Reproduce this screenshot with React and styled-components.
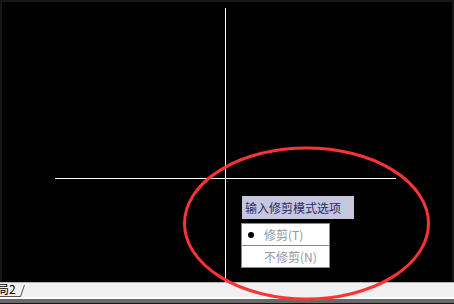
import React from "react";
import styled, { createGlobalStyle } from "styled-components";

const GlobalStyle = createGlobalStyle`
    html, body {
        margin: 0;
        padding: 0;
        background: #000;
    }
    body {
        font-family: "Liberation Sans", "Noto Sans CJK SC", sans-serif;
    }
`;

const Frame = styled.div`
    position: relative;
    width: 454px;
    height: 304px;
    box-sizing: border-box;
    padding: 2px 2px 0 2px;
    background: #171717;
    display: flex;
    flex-direction: column;
    overflow: hidden;
`;

const Canvas = styled.div`
    position: relative;
    flex: 1;
    background: #000;
`;

const Crosshair = styled.svg`
    position: absolute;
    inset: 0;
    width: 100%;
    height: 100%;
`;

const Prompt = styled.div`
    position: absolute;
    left: 240px;
    top: 194px;
    width: 112px;
    height: 23px;
    box-sizing: border-box;
    padding-left: 3px;
    display: flex;
    align-items: center;
    background: #c6c6de;
    color: #2c2c6c;
    font-family: "Noto Sans CJK SC", sans-serif;
    font-size: 12px;
`;

const Menu = styled.div`
    position: absolute;
    left: 239px;
    top: 221px;
    width: 89px;
    box-sizing: border-box;
    border: 1px solid #8a8a8a;
    background: #fff;
    display: flex;
    flex-direction: column;
`;

const MenuItem = styled.div`
    height: 21px;
    display: flex;
    align-items: center;
    padding-left: 22px;
    position: relative;
    color: #9696a6;
    font-family: "Noto Sans CJK SC", sans-serif;
    font-size: 12px;
    & + & {
        border-top: 1px solid #8a8a8a;
    }
`;

const Bullet = styled.span`
    position: absolute;
    left: 6px;
    top: 8px;
    width: 6px;
    height: 6px;
    border-radius: 50%;
    background: #000;
`;

const TabStrip = styled.div`
    height: 22px;
    display: flex;
    flex-direction: column;
    margin: 0 -2px;
`;

const TabBar = styled.div`
    position: relative;
    height: 14px;
    border-top: 1px solid #b4b4b4;
    background: #f0f0f0;
    border-bottom: 2px solid #fff;
    overflow: hidden;
`;

const TabLabel = styled.span`
    position: absolute;
    left: -15px;
    top: -2px;
    font-family: "Noto Sans CJK SC", sans-serif;
    font-size: 12px;
    color: #000;
    line-height: 16px;
`;

const TabEdge = styled.svg`
    position: absolute;
    left: 0;
    top: 0;
`;

const Scroll = styled.div`
    height: 4px;
    background: #686868;
`;

const Ring = styled.svg`
    position: absolute;
    left: 0;
    top: 0;
    pointer-events: none;
`;

export default function App() {
    return (
        <>
            <GlobalStyle />
            <Frame>
                <Canvas>
                    <Crosshair>
                        <line x1="223.5" y1="6" x2="223.5" y2="300" stroke="#fff" strokeWidth="1" />
                        <line x1="53" y1="176.5" x2="394" y2="176.5" stroke="#fff" strokeWidth="1" />
                    </Crosshair>
                    <Prompt>输入修剪模式选项</Prompt>
                    <Menu>
                        <MenuItem><Bullet />修剪(T)</MenuItem>
                        <MenuItem>不修剪(N)</MenuItem>
                    </Menu>
                </Canvas>
                <TabStrip>
                    <TabBar>
                        <TabLabel>布局2</TabLabel>
                        <TabEdge width="30" height="14">
                            <polyline points="0,13.5 20.5,13.5 24.5,2" fill="none" stroke="#555" strokeWidth="1" />
                        </TabEdge>
                    </TabBar>
                    <Scroll />
                </TabStrip>
                <Ring width="454" height="304">
                    <ellipse cx="306.5" cy="223.5" rx="122" ry="75.5" fill="none" stroke="#ff3333" strokeWidth="3" />
                </Ring>
            </Frame>
        </>
    );
}
